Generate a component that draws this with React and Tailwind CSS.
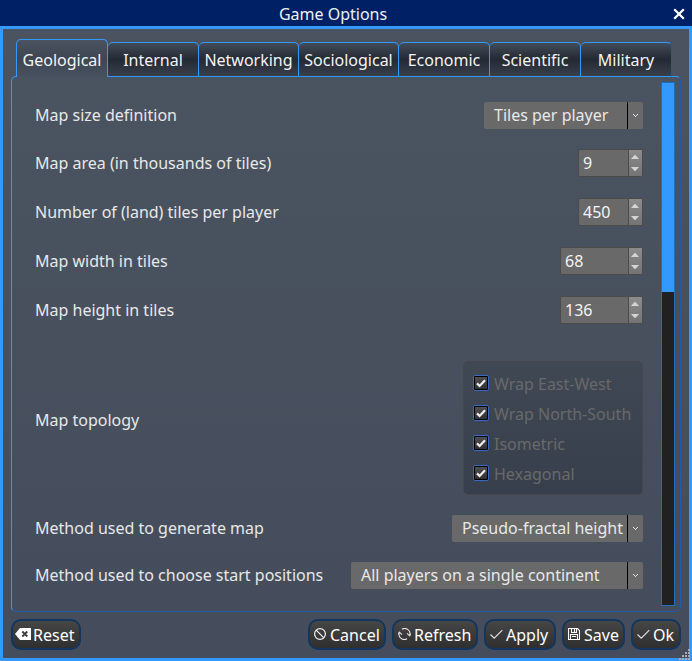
import React from "react";

const TABS = [
  ["Internal", "w-[91px]"],
  ["Networking", "w-[100px]"],
  ["Sociological", "w-[100px]"],
  ["Economic", "w-[91px]"],
  ["Scientific", "w-[91px]"],
  ["Military", "w-[91px]"],
];

function Combo({ text, width }) {
  return (
    <div className={`flex h-[27px] ${width} rounded-[2px] bg-[#696969] text-[#e8e8e8]`}>
      <div className="flex flex-1 items-center whitespace-nowrap border-r border-black pl-[10px] leading-[27px]">{text}</div>
      <div className="flex w-[15px] items-center justify-center">
        <svg width="5" height="3" viewBox="0 0 5 3" fill="#dfe6ee" shapeRendering="crispEdges">
          <path d="M0 0h1v1H0zM4 0h1v1H4zM1 1h1v1H1zM3 1h1v1H3zM2 2h1v1H2z" />
        </svg>
      </div>
    </div>
  );
}

function Spin({ value, width }) {
  return (
    <div className={`flex h-[28px] ${width} overflow-hidden rounded-[2px] border border-[#4b4b4b] bg-[#696969] text-[#f4f4f4]`}>
      <div className="flex-1 pl-[4px] leading-[27px]">{value}</div>
      <div className="flex w-[14px] flex-col items-start justify-between border-l border-[#4b4b4b] bg-linear-to-b from-[#8c8c8c] to-[#747474] pb-[5px] pl-[2px] pt-[5px]">
        <svg width="8" height="4" viewBox="0 0 8 4"><path d="M0 4 3.6 0H4.4L8 4z" fill="#d4d4d4" /></svg>
        <svg width="8" height="4" viewBox="0 0 8 4"><path d="M0 0 3.6 4H4.4L8 0z" fill="#d4d4d4" /></svg>
      </div>
    </div>
  );
}

function Row({ label, children, className = "" }) {
  return (
    <div className={`flex items-center justify-between ${className}`}>
      <span className="whitespace-nowrap leading-[27px]">{label}</span>
      {children}
    </div>
  );
}

function Check({ label }) {
  return (
    <div className="flex h-[30px] items-center">
      <span className="mb-[2px] flex h-[16px] w-[16px] items-center justify-center rounded-[2px] border border-[#3868c8] bg-black p-px">
        <span className="flex h-[12px] w-[12px] items-center justify-center bg-linear-to-b from-[#505050] to-[#303030]">
          <svg width="10" height="9" viewBox="0 0 10 9" fill="none" stroke="#eeeeee" strokeWidth="2.2">
            <path d="M1 4.4 3.6 7 9 1.2" />
          </svg>
        </span>
      </span>
      <span className="ml-[5px] text-[#696969]">{label}</span>
    </div>
  );
}

function Button({ icon, children, width, pad = "pl-[4px]" }) {
  return (
    <button className={`flex h-[31px] ${width} items-center ${pad} rounded-[10px] border-2 border-[#12365f] bg-linear-to-b from-[#464646] to-[#2f2f2f] text-white`}>
      {icon}
      <span className="whitespace-nowrap pt-[2px] leading-[27px]">{children}</span>
    </button>
  );
}

const CheckIcon = () => (
  <svg className="mr-[2px] shrink-0" width="14" height="14" viewBox="0 0 14 14" fill="none" stroke="#e4e4e4" strokeWidth="1.1">
    <path d="M0.5 6.5 4.2 10.2 12.3 2.2" />
  </svg>
);

export default function App() {
  return (
    <div className="flex h-[661px] w-[692px] flex-col overflow-hidden bg-[#001f63] text-[16px] text-[#e8e8e8] [font-family:'Noto_Sans',sans-serif]">
      <header className="grid h-[26px] shrink-0 grid-cols-[26px_1fr_26px] items-center bg-[#002065] text-[#f0f0f0]">
        <span />
        <span className="pr-[26px] pt-px text-center leading-[26px]">Game Options</span>
        <svg className="ml-[7px]" width="12" height="12" viewBox="0 0 12 12" fill="none" stroke="#fff" strokeWidth="2.2">
          <path d="M1.2 1.2 10.8 10.8M10.8 1.2 1.2 10.8" />
        </svg>
      </header>
      <main className="relative flex flex-1 flex-col border-[3px] border-[#3399ff] bg-linear-to-b from-[#4b5360] to-[#454d5c] px-[8px] pt-[10px]">
        <nav className="relative z-10 ml-[5px] flex h-[38px] shrink-0 items-end text-[#f4f4f4]">
          <div className="h-[38px] w-[92px] rounded-t-[5px] border border-b-0 border-[#3399ff] bg-linear-to-b from-[#4b5360] via-[#3d4652] to-[#485160] text-center leading-[41px]">
            Geological
          </div>
          {TABS.map(([name, width]) => (
            <div key={name} className={`h-[35px] ${width} rounded-t-[5px] border-y border-r border-[#3399ff] bg-linear-to-b from-[#434d59] via-[#242932] to-[#38414d] text-center leading-[35px] last:border-r-[#1f5ca6]`}>
              {name}
            </div>
          ))}
        </nav>
        <section className="-mt-px flex h-[536px] w-[670px] shrink-0 rounded-[5px] border border-[#1f5ca6] border-l-[#3399ff] border-t-[#3399ff] bg-linear-to-b from-[#4a5360] to-[#454d5c]">
          <div className="flex w-[631px] flex-col pl-[23px] pt-[25px]">
            <Row label="Map size definition" className="h-[27px]"><Combo text="Tiles per player" width="w-[159px]" /></Row>
            <Row label="Map area (in thousands of tiles)" className="mt-[20px] h-[28px]"><Spin value="9" width="w-[65px]" /></Row>
            <Row label="Number of (land) tiles per player" className="mt-[21px] h-[28px]"><Spin value="450" width="w-[65px]" /></Row>
            <Row label="Map width in tiles" className="mt-[21px] h-[28px]"><Spin value="68" width="w-[83px]" /></Row>
            <Row label="Map height in tiles" className="mt-[21px] h-[28px]"><Spin value="136" width="w-[83px]" /></Row>
            <Row label="Map topology" className="mt-[21px] h-[150px]">
              <div className="h-[134px] w-[180px] self-end rounded-[5px] border border-[#464749] bg-linear-to-b from-[#404854] to-[#383f4c] pl-[9px] pt-[7px]">
                <Check label="Wrap East-West" />
                <Check label="Wrap North-South" />
                <Check label="Isometric" />
                <Check label="Hexagonal" />
              </div>
            </Row>
            <Row label="Method used to generate map" className="mt-[20px] h-[27px]"><Combo text="Pseudo-fractal height" width="w-[191px]" /></Row>
            <Row label="Method used to choose start positions" className="mt-[20px] h-[27px]"><Combo text="All players on a single continent" width="w-[292px]" /></Row>
          </div>
          <div className="ml-[18px] mt-[5px] h-[524px] w-[14px] border border-[#1f6dbd] bg-[#212121]">
            <div className="h-[209px] bg-[#3399ff]" />
          </div>
        </section>
        <footer className="mt-[7px] flex">
          <Button width="w-[70px]" pad="pl-[2px]" icon={
            <svg className="mb-[2px] mr-[2px] shrink-0" width="16" height="12" viewBox="0 0 16 12">
              <path d="M5 0H16V12H5L0 6z" fill="#fff" />
              <path d="M7.3 3.5 12.3 8.5M12.3 3.5 7.3 8.5" stroke="#3d3d3d" strokeWidth="1.8" />
            </svg>}>Reset</Button>
          <Button width="ml-[227px] w-[78px]" icon={
            <svg className="mb-[2px] mr-[4px] shrink-0" width="12" height="12" viewBox="0 0 12 12" fill="none" stroke="#f2f2f2" strokeWidth="1.2">
              <circle cx="6" cy="6" r="5.4" /><path d="M2.2 2.2 9.8 9.8" />
            </svg>}>Cancel</Button>
          <Button width="ml-[6px] w-[86px]" icon={
            <svg className="mb-[2px] mr-[3px] shrink-0" width="13" height="12" viewBox="0 0 13 12" fill="none" stroke="#e6e6e6" strokeWidth="1.1">
              <path d="M4 1.2A5.3 5.3 0 0 1 11.7 7.4M9 5.4 11.7 7.8 12.9 5.6M9 10.8A5.3 5.3 0 0 1 1.3 4.6M0.1 6.4 1.3 4.2 4 6.6" />
            </svg>}>Refresh</Button>
          <Button width="ml-[6px] w-[72px]" icon={<CheckIcon />}>Apply</Button>
          <Button width="ml-[6px] w-[63px]" icon={
            <svg className="mb-[2px] mr-[4px] shrink-0" width="12" height="12" viewBox="0 0 12 12" fill="none" stroke="#fff" strokeWidth="1.1">
              <path d="M0.5 0.5H9.5L11.5 2.5V11.5H0.5zM3.5 0.5V4.5H8.5V0.5M6.5 1V4M2.5 11.5V6.5H9.5V11.5M4 8.5H8" />
            </svg>}>Save</Button>
          <Button width="ml-[6px] w-[50px]" icon={<CheckIcon />}>Ok</Button>
        </footer>
        <svg className="absolute -bottom-[2px] -right-[1px]" width="11" height="11" viewBox="0 0 11 11" fill="#a5abb3">
          <path d="M9 0h2v2H9zM6 3h2v2H6zM9 3h2v2H9zM3 6h2v2H3zM6 6h2v2H6zM9 6h2v2H9zM0 9h2v2H0zM3 9h2v2H3zM6 9h2v2H6zM9 9h2v2H9z" />
        </svg>
      </main>
    </div>
  );
}
